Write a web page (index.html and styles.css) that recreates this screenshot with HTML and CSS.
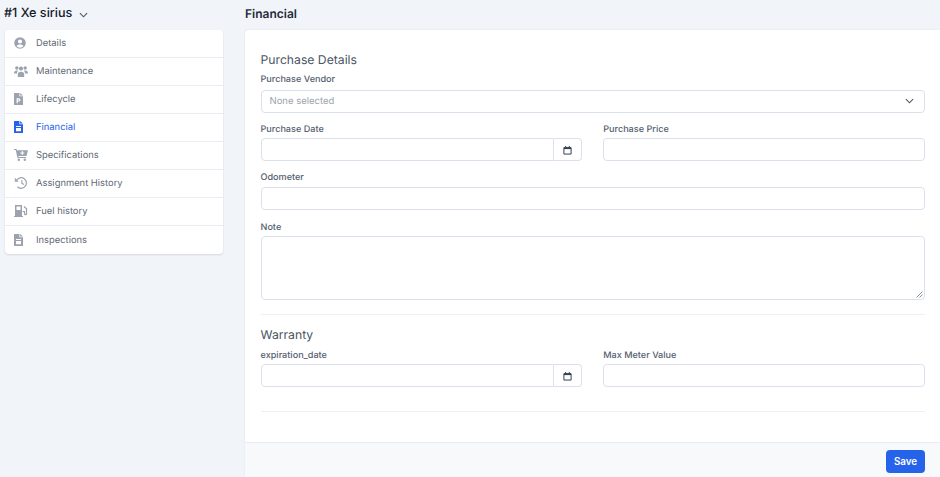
FILE: index.html
```html
<!DOCTYPE html>
<html lang="en">
<head>
<meta charset="utf-8">
<title>Financial</title>
<link rel="stylesheet" href="styles.css">
</head>
<body>
<div class="layout">
  <aside class="side">
    <div class="vehicle"><span>#1 Xe sirius</span>
      <svg class="caret" viewBox="0 0 10 6" width="9" height="6"><path d="M1 1l4 4 4-4" fill="none" stroke="#4b5563" stroke-width="1.2"/></svg>
    </div>
    <nav class="menu">
      <a class="item"><span class="slot"><svg class="ico round" viewBox="0 0 12 12"><path fill-rule="evenodd" d="M6 .2a5.800 5.800 0 1 0 0 11.600A5.800 5.800 0 0 0 6 .2zM6 2.400a2.100 2.100 0 1 1 0 4.200 2.100 2.100 0 0 1 0-4.200zM2.500 9.100c.5-1.100 1.800-1.700 3.500-1.700s3 .6 3.500 1.700A4.700 4.700 0 0 1 6 10.700a4.700 4.700 0 0 1-3.500-1.600z"/></svg></span>Details</a>
      <a class="item"><span class="slot"><svg class="ico wide" viewBox="0 0 14 11"><circle cx="2.800" cy="2" r="1.700"/><circle cx="11.200" cy="2" r="1.700"/><circle cx="7" cy="2.600" r="2.100"/><path d="M0 7.500c0-2 1-3 2.800-3 .5 0 .9.100 1.200.3C3.300 5.500 3 6.500 3 7.500zM14 7.500c0-2-1-3-2.800-3-.5 0-.9.100-1.200.3.700.7 1 1.700 1 2.700zM3.800 11V8.300c0-1.500 1.100-2.500 3.200-2.500s3.200 1 3.200 2.500V11z"/></svg></span>Maintenance</a>
      <a class="item"><span class="slot"><svg class="ico doc" viewBox="0 0 9 12"><path fill-rule="evenodd" d="M0 0h5.400v3.300H9V12H0zM6.100 0L9 2.600H6.100zM2.600 5.300v5h1.200V8.600h1a1.650 1.650 0 0 0 0-3.300zM3.800 6.400h.9a.55.55 0 0 1 0 1.100h-.9z"/></svg></span>Lifecycle</a>
      <a class="item active"><span class="slot"><svg class="ico doc" viewBox="0 0 9 12"><path fill-rule="evenodd" d="M0 0h5.400v3.300H9V12H0zM6.100 0L9 2.600H6.100zM2 5v1h5V5zM2 7v3.200h5V7z"/></svg></span>Financial</a>
      <a class="item"><span class="slot"><svg class="ico wide tall" viewBox="0 0 14 12"><path fill-rule="evenodd" d="M0 0h2.500l.4 1.300H14l-1.500 5.700H4.300l.3 1h7.400v1H3.500L1.700 1H0zM7.800 2v1.500H6.300v1h1.500V6h1V4.500h1.500v-1H8.800V2z"/><circle cx="4.800" cy="10.800" r="1.200"/><circle cx="10.800" cy="10.800" r="1.200"/></svg></span>Specifications</a>
      <a class="item"><span class="slot"><svg class="ico wide tall" viewBox="0 0 14 12"><path class="stroke" d="M2.600 3.200A5.300 5.300 0 1 1 3.400 9.800M7.800 3.200V6.200l2.200 1.400"/><path d="M.8 .8v4h4z"/></svg></span>Assignment History</a>
      <a class="item"><span class="slot"><svg class="ico wide tall" viewBox="0 0 14 12"><path fill-rule="evenodd" d="M1 0h7v11h1v1H0v-1h1zM2.500 1.500v3.500h4V1.500z"/><path class="stroke" d="M10 1.500l2.500 2.200v5a1 1 0 0 1-2 0V6.500H8.500"/></svg></span>Fuel history</a>
      <a class="item"><span class="slot"><svg class="ico doc" viewBox="0 0 9 12"><path fill-rule="evenodd" d="M0 0h5.400v3.300H9V12H0zM6.100 0L9 2.600H6.100zM2 5v1h5V5zM2 7v3.200h5V7z"/></svg></span>Inspections</a>
    </nav>
  </aside>
  <main class="main">
    <h1 class="title">Financial</h1>
    <section class="card">
      <div class="body">
        <h2 class="heading">Purchase Details</h2>
        <label class="label vendor">Purchase Vendor</label>
        <div class="control select"><span>None selected</span>
          <svg viewBox="0 0 10 6" width="9" height="6"><path d="M1 1l4 4 4-4" fill="none" stroke="#4b5563" stroke-width="1.200"/></svg>
        </div>
        <div class="row">
          <div class="col"><label class="label">Purchase Date</label>
            <div class="group"><div class="control grow"></div><div class="addon"><svg viewBox="0 0 10 10" width="9" height="10"><path fill="none" stroke="#374151" stroke-width="1.100" d="M1 2.500h8v7H1zM3 .5v2M7 .5v2"/><path fill="#374151" d="M1 2h8v2H1z"/></svg></div></div>
          </div>
          <div class="col"><label class="label">Purchase Price</label><div class="control"></div></div>
        </div>
        <label class="label odo">Odometer</label>
        <div class="control"></div>
        <label class="label note">Note</label>
        <div class="control area"><svg class="grip" viewBox="0 0 7 7" width="7" height="7"><path d="M6.500 .5l-6 6M6.500 3.500l-3 3" stroke="#6b7280" stroke-width=".8"/></svg></div>
        <hr class="rule first">
        <h2 class="heading">Warranty</h2>
        <div class="row tight">
          <div class="col"><label class="label">expiration_date</label>
            <div class="group"><div class="control grow"></div><div class="addon"><svg viewBox="0 0 10 10" width="9" height="10"><path fill="none" stroke="#374151" stroke-width="1.100" d="M1 2.500h8v7H1zM3 .5v2M7 .5v2"/><path fill="#374151" d="M1 2h8v2H1z"/></svg></div></div>
          </div>
          <div class="col"><label class="label">Max Meter Value</label><div class="control"></div></div>
        </div>
        <hr class="rule second">
      </div>
      <footer class="foot"><button class="save">Save</button></footer>
    </section>
  </main>
</div>
</body>
</html>
```
FILE: styles.css
```css
* { box-sizing: border-box; }
html, body { margin: 0; height: 100%; }
body { background: #f1f4f9; font-family: Inter, "Liberation Sans", sans-serif; color: #4b5563; overflow: hidden; text-rendering: geometricPrecision; }
.layout { display: flex; height: 477px; }
.side { width: 245px; flex: none; padding: 0 22px 0 5px; }
.vehicle { height: 30px; margin-left: -1px; padding-bottom: 3px; display: flex; align-items: center; gap: 7px; font-size: 12.600px; font-weight: 500; color: #111827; }
.caret { margin-top: 2px; }
.menu { background: #fff; border-radius: 4px; box-shadow: 0 1px 2px rgba(0,0,0,.12); display: flex; flex-direction: column; }
.item { height: 28px; padding: 0 0 0 9px; display: flex; align-items: center; font-size: 9.400px; font-weight: 400; color: #5f6875; border-bottom: 1px solid #e9edf3; }
.item:last-child { border-bottom: 0; }
.item.active { color: #2563eb; }
.slot { width: 22px; flex: none; display: flex; margin-top: -1px; }
.ico { fill: #9ca3af; color: #9ca3af; flex: none; }
.ico.round { width: 12px; height: 12px; }
.ico.doc { width: 9px; height: 12px; }
.ico.wide { width: 14px; height: 11px; }
.ico.tall { height: 12px; }
.stroke { fill: none; stroke: currentColor; stroke-width: 1.200; }
.active .ico { fill: #2563eb; }
.main { flex: 1; display: flex; flex-direction: column; min-width: 0; }
.title { height: 30px; margin: 0; font-size: 12px; font-weight: 600; color: #1f2937; line-height: 28px; }
.card { flex: 1; background: #fff; border-radius: 4px 0 0 0; box-shadow: 0 0 2px rgba(0,0,0,.1); display: flex; flex-direction: column; }
.body { flex: 1; padding: 21px 15px 0 15.500px; }
.heading { margin: 0; font-size: 12.200px; font-weight: 400; color: #4b5563; line-height: 18px; }
.label { display: block; font-size: 9.100px; font-weight: 500; color: #566070; line-height: 12px; margin: 0 0 2.500px; }
.vendor { margin: 5px 0 3.500px; }
.control { height: 23px; border: 1px solid #dbe1ea; border-radius: 4px; background: #fff; }
.select { display: flex; align-items: center; justify-content: space-between; padding: 0 10px 0 8px; font-size: 9.500px; color: #9ca3af; }
.row { display: flex; gap: 21px; margin-top: 11px; }
.row.tight { margin-top: 6px; }
.col { flex: 1; min-width: 0; }
.group { display: flex; }
.grow { flex: 1; border-radius: 4px 0 0 4px; }
.addon { width: 28.500px; height: 23px; display: flex; align-items: center; justify-content: center; border: 1px solid #dbe1ea; border-left: 0; border-radius: 0 4px 4px 0; }
.odo { margin: 11px 0 3px; }
.note { margin: 11.500px 0 2.500px; }
.area { height: 64px; position: relative; }
.grip { position: absolute; right: 1px; bottom: 1px; }
.rule { border: 0; border-top: 1px solid #eef0f4; margin: 0; }
.first { margin: 14px 0 10.500px; }
.second { margin-top: 24px; }
.foot { height: 35px; padding: 3px 15px 0 0; background: #f8f9fb; border-top: 1px solid #e9edf3; display: flex; align-items: center; justify-content: flex-end; }
.save { width: 39px; height: 23px; background: #2563eb; color: #fff; border: 0; border-radius: 4px; font: 600 9.800px Inter, "Liberation Sans", sans-serif; padding: 0; }
```
